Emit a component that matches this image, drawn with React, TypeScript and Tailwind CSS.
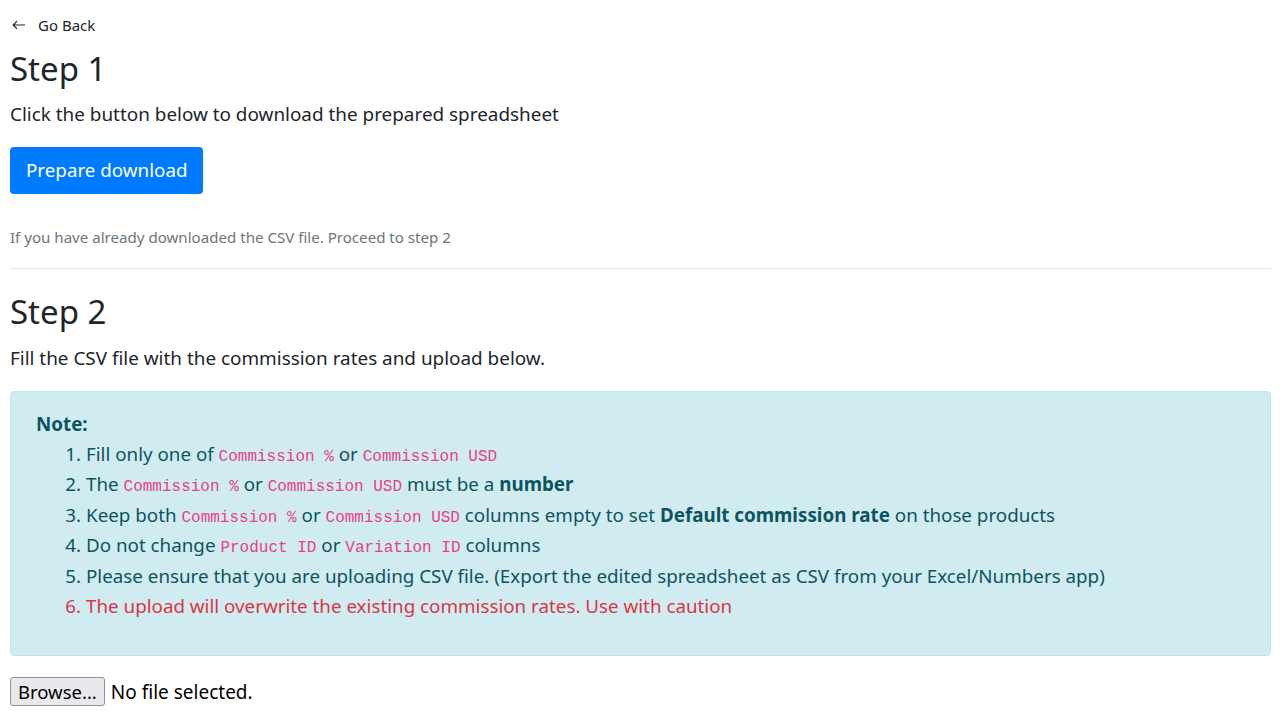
const CODE = "font-['Liberation_Mono',monospace] text-[16px] leading-none text-[#e83e8c]";

function Code({ children }: { children: string }) {
  return <code className={CODE}>{children}</code>;
}

export default function App() {
  return (
    <div className="min-h-screen bg-white pl-[10px] pr-[9px] font-['Noto_Sans',sans-serif] text-[#212529]">
      <a href="#" className="mt-[15px] flex items-center gap-[12px] text-[15px] leading-[20px] text-[#212529]">
        <svg width="14" height="10" viewBox="0 0 14 10" fill="none" stroke="currentColor" strokeWidth="1.2" className="ml-[2px]">
          <path d="M13 5H1.5M5 1.2 1.2 5 5 8.8" />
        </svg>
        Go Back
      </a>

      <h2 className="mt-[12px] text-[33px] font-normal leading-[44px]">Step 1</h2>
      <p className="mt-[8px] text-[18.9px] leading-[30px]">Click the button below to download the prepared spreadsheet</p>
      <button className="mt-[18px] h-[47px] rounded-[4px] bg-[#007bff] px-[16px] text-[18.8px] text-white">
        Prepare download
      </button>
      <p className="mt-[32px] text-[15.1px] leading-[22px] text-[#6c757d]">
        If you have already downloaded the CSV file. Proceed to step 2
      </p>
      <hr className="mt-[20px] border-t border-[rgba(0,0,0,0.1)]" />

      <h2 className="mt-[21px] text-[33px] font-normal leading-[44px]">Step 2</h2>
      <p className="mt-[9px] text-[18.9px] leading-[30px]">Fill the CSV file with the commission rates and upload below.</p>

      <div className="mt-[18px] rounded-[4px] border border-[#bee5eb] bg-[#d1ecf1] px-[25px] pb-[34px] pt-[17px] text-[18.8px] text-[#0c5460]">
        <p className="font-bold leading-[30px]">Note:</p>
        <ol className="list-decimal pl-[50px] leading-[30.4px]">
          <li>
            Fill only one of <Code>Commission %</Code> or <Code>Commission USD</Code>
          </li>
          <li>
            The <Code>Commission %</Code> or <Code>Commission USD</Code> must be a <b>number</b>
          </li>
          <li>
            Keep both <Code>Commission %</Code> or <Code>Commission USD</Code> columns empty to set{" "}
            <b>Default commission rate</b> on those products
          </li>
          <li>
            Do not change <Code>Product ID</Code> or <Code>Variation ID</Code> columns
          </li>
          <li>
            Please ensure that you are uploading CSV file. (Export the edited spreadsheet as CSV from your Excel/Numbers app)
          </li>
          <li className="text-[#dc3545]">The upload will overwrite the existing commission rates. Use with caution</li>
        </ol>
      </div>

      <div className="mt-[21px] flex items-center gap-[6px] pb-[8px] text-[19px]">
        <span className="flex h-[29px] items-center rounded-[3px] border border-[#8f8f9d] bg-[#e9e9ed] px-[7px] text-[18.5px] text-black">
          Browse...
        </span>
        <span className="text-black">No file selected.</span>
      </div>
    </div>
  );
}
